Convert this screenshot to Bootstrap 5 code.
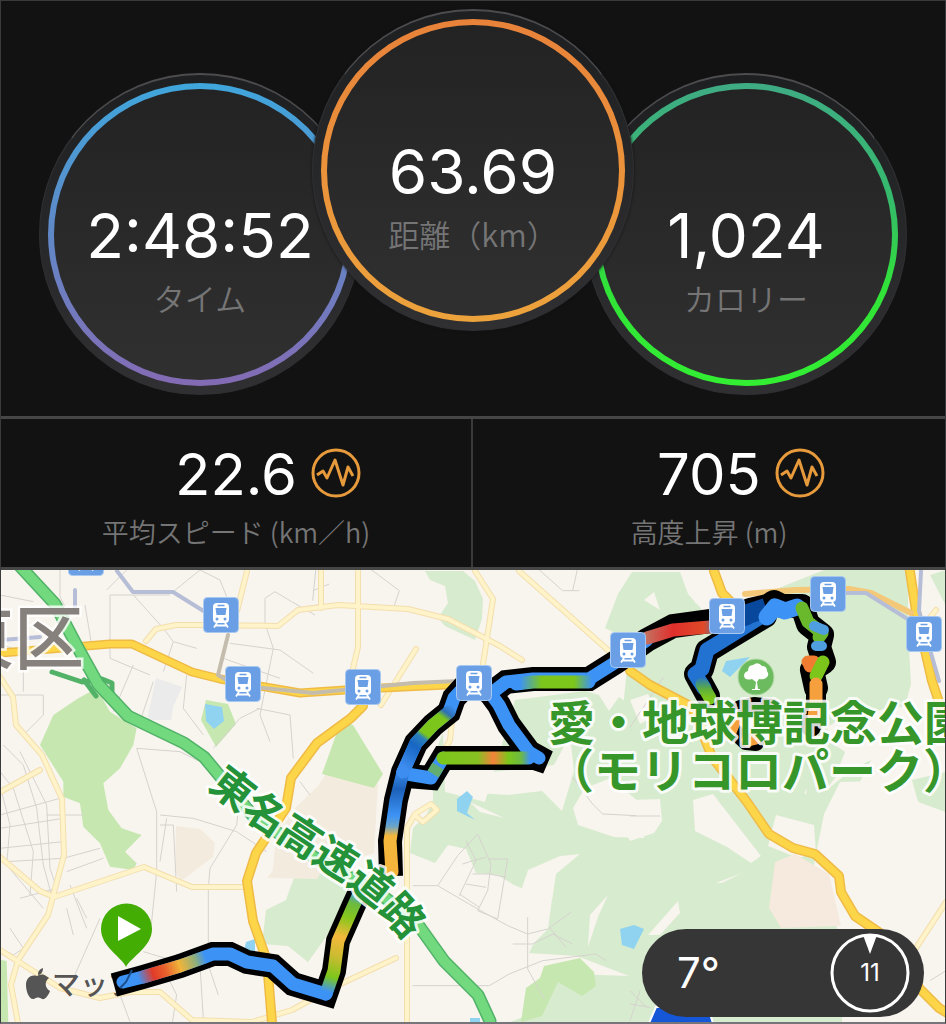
<!DOCTYPE html>
<html lang="ja">
<head>
<meta charset="utf-8">
<meta name="viewport" content="width=device-width, initial-scale=1">
<title>アクティビティ</title>
<link rel="stylesheet" href="https://cdn.jsdelivr.net/npm/bootstrap@5.3.0/dist/css/bootstrap.min.css">
<style>
body{background:#121212;color:#fff;font-family:Inter,"Noto Sans CJK JP",sans-serif}
.activity{border:1px solid #3a3b3d;border-bottom:2px solid #77757a}
.dials{padding:8px 0 21px}
.dial{width:322px;height:322px;flex:none;padding:8px;background:linear-gradient(#1e1f21,#303032);border:1px solid #303033;border-top:2px solid #4c4b4e}
.dial-side{margin-top:64px}
.dial-left{margin-right:-49px}
.dial-right{margin-left:-49px}
.dial-main{z-index:1;box-shadow:0 0 3px #121212}
.dial-face{border:6px solid transparent;padding-top:115px}
.ring-blue{background:linear-gradient(#232324,#303031) padding-box,linear-gradient(#3fa6dc,#5d8bc9 45%,#846bb4) border-box}
.ring-orange{background:linear-gradient(#232324,#303031) padding-box,linear-gradient(#e8823a,#eda33c) border-box}
.ring-green{background:linear-gradient(#232324,#303031) padding-box,linear-gradient(#3fac84,#35b96c 38%,#31e338 68%,#33ee33) border-box}
.dial-value{font-size:62px;line-height:64px}
.dial-label{font-size:31px;line-height:36px;margin-top:12px;color:#757576;font-family:"Noto Sans CJK JP",sans-serif;font-weight:350}
.stats{border-top:3px solid #464646;border-bottom:3px solid #464646}
.stat{padding:24px 0 19px}
.stat-first{border-right:2px solid #3a3a3a}
.stat-value{font-size:58px;line-height:62px}
.stat-icon{left:100%;top:5px;margin-left:14px}
.stat-label{font-size:27px;line-height:32px;margin-top:11px;color:#757576;font-family:"Noto Sans CJK JP",sans-serif;font-weight:350}
.map-canvas{background:#f8f4ee;width:100%;height:auto}
.map-canvas text{font-family:"Noto Sans CJK JP",sans-serif}
.weather{right:21px;bottom:5px;width:282px;height:88px;background:#373637;padding:0 14px 0 35px}
.weather-temp{font-size:42px;line-height:48px}
.weather-wind{width:80px;height:80px}
.weather-wind span{font-size:24px;line-height:28px}
.thin path{stroke:#d6d2ce;stroke-width:3;fill:none}
.road{fill:none;stroke-linejoin:round;stroke-linecap:round}
.route-case{stroke-linejoin:miter;stroke-linecap:butt}
</style>
</head>
<body>
<main class="activity">
  <section class="dials d-flex justify-content-center align-items-start">
    <div class="dial dial-side dial-left rounded-circle">
      <div class="dial-face ring-blue rounded-circle w-100 h-100 text-center">
        <div class="dial-value">2:48:52</div><div class="dial-label">タイム</div>
      </div>
    </div>
    <div class="dial dial-main rounded-circle position-relative">
      <div class="dial-face ring-orange rounded-circle w-100 h-100 text-center">
        <div class="dial-value">63.69</div><div class="dial-label">距離（km）</div>
      </div>
    </div>
    <div class="dial dial-side dial-right rounded-circle">
      <div class="dial-face ring-green rounded-circle w-100 h-100 text-center">
        <div class="dial-value">1,024</div><div class="dial-label">カロリー</div>
      </div>
    </div>
  </section>

  <section class="stats row g-0 text-center">
    <div class="stat stat-first col-6">
      <div class="stat-value d-inline-block position-relative">22.6
        <svg class="stat-icon position-absolute" width="50" height="50" viewBox="0 0 50 50" fill="none" stroke="#e69a3c" aria-hidden="true"><circle cx="25" cy="25" r="23" stroke-width="3"/><path d="M6 27l6-4 4 7 8-18 8 25 5-18 5 9" stroke-width="3" stroke-linejoin="round"/></svg>
      </div>
      <div class="stat-label">平均スピード (km／h)</div>
    </div>
    <div class="stat col-6">
      <div class="stat-value d-inline-block position-relative">705
        <svg class="stat-icon position-absolute" width="50" height="50" viewBox="0 0 50 50" fill="none" stroke="#e69a3c" aria-hidden="true"><circle cx="25" cy="25" r="23" stroke-width="3"/><path d="M6 27l6-4 4 7 8-18 8 25 5-18 5 9" stroke-width="3" stroke-linejoin="round"/></svg>
      </div>
      <div class="stat-label">高度上昇 (m)</div>
    </div>
  </section>

  <section class="position-relative">
    <svg class="map-canvas d-block" viewBox="1 570 944 452" role="img" aria-label="ルートマップ">
      <defs>
        <symbol id="station" viewBox="0 0 36 36">
          <rect x=".5" y=".5" width="35" height="35" rx="4" fill="#6a9fe6" stroke="#a9c8f0"/>
          <path d="M14 6h8q4 0 4 4v12q0 4-4 4h-8q-4 0-4-4V10q0-4 4-4z" fill="#fff"/>
          <path d="M14.500 8.500h7" stroke="#6a9fe6" stroke-width="1.500"/>
          <path d="M12.500 11h11l-1 7h-9z" fill="#6a9fe6"/>
          <circle cx="14" cy="22" r="1.500" fill="#6a9fe6"/><circle cx="22" cy="22" r="1.500" fill="#6a9fe6"/>
          <path d="M14 26l-3 4.500M22 26l3 4.500M13 28.500h10" stroke="#fff" stroke-width="1.800"/>
        </symbol>
        <linearGradient id="g-start" gradientUnits="userSpaceOnUse" x1="138" y1="978" x2="205" y2="956"><stop stop-color="#3d93f5"/><stop offset=".22" stop-color="#e23b28"/><stop offset=".4" stop-color="#e8602c"/><stop offset=".62" stop-color="#f0b43a"/><stop offset=".85" stop-color="#8fae7a"/><stop offset="1" stop-color="#3d93f5"/></linearGradient>
        <linearGradient id="g-rise" gradientUnits="userSpaceOnUse" x1="328" y1="992" x2="358" y2="894"><stop stop-color="#3d93f5"/><stop offset=".15" stop-color="#7cc61b"/><stop offset=".35" stop-color="#c9bc30"/><stop offset=".55" stop-color="#f5b83c"/><stop offset=".75" stop-color="#86c61c"/><stop offset=".9" stop-color="#6cba40"/><stop offset="1" stop-color="#4c9fd8"/></linearGradient>
        <linearGradient id="g-mid" gradientUnits="userSpaceOnUse" x1="0" y1="874" x2="0" y2="768"><stop stop-color="#f5b33c"/><stop offset=".36" stop-color="#f5b83c"/><stop offset=".45" stop-color="#6aa4c8"/><stop offset=".55" stop-color="#3d93f5"/><stop offset=".8" stop-color="#1c61b8"/><stop offset="1" stop-color="#3d93f5"/></linearGradient>
        <linearGradient id="g-up" gradientUnits="userSpaceOnUse" x1="405" y1="768" x2="452" y2="705"><stop stop-color="#3d8df0"/><stop offset=".3" stop-color="#1766c4"/><stop offset=".44" stop-color="#2a80b8"/><stop offset=".5" stop-color="#7cc61b"/><stop offset=".8" stop-color="#7cc61b"/><stop offset=".88" stop-color="#2f6fb4"/><stop offset="1" stop-color="#3d93f5"/></linearGradient>
        <linearGradient id="g-low" gradientUnits="userSpaceOnUse" x1="443" y1="0" x2="530" y2="0"><stop stop-color="#7cc61b"/><stop offset=".4" stop-color="#86c022"/><stop offset=".58" stop-color="#f4823a"/><stop offset=".75" stop-color="#7cc61b"/><stop offset=".9" stop-color="#6db944"/><stop offset="1" stop-color="#3d93f5"/></linearGradient>
        <linearGradient id="g-east" gradientUnits="userSpaceOnUse" x1="520" y1="0" x2="592" y2="0"><stop stop-color="#3d93f5"/><stop offset=".3" stop-color="#7cc61b"/><stop offset=".75" stop-color="#7cc61b"/><stop offset="1" stop-color="#3d93f5"/></linearGradient>
        <linearGradient id="g-red" gradientUnits="userSpaceOnUse" x1="642" y1="0" x2="745" y2="0"><stop stop-color="#c07a68"/><stop offset=".3" stop-color="#e02f2c"/><stop offset=".6" stop-color="#e04a28"/><stop offset=".75" stop-color="#3f7fc0"/><stop offset="1" stop-color="#07489c"/></linearGradient>
        <linearGradient id="g-loop" gradientUnits="userSpaceOnUse" x1="0" y1="676" x2="0" y2="698"><stop stop-color="#2272d2"/><stop offset=".6" stop-color="#5fae3c"/><stop offset="1" stop-color="#7cc61b"/></linearGradient>
        <path id="expressway-name" d="M207 788L252 823L293 850L341 880L375 907L425 962"/>
      </defs>

      <!-- woodland and parks -->
      <g fill="#d7ebce">
        <path d="M425 571h38l12 10 8 18-1 20-7 21-30-14-7-8 10-15-3-17-15-6z"/>
        <path d="M618 594l14-22h48l8 22 18 20 38-12 80-32h84v60l3 54-6 22-60 10-16 10-4 12 20 14-10 26-8 10-20 56-8 4 8-60-10 20-36 20-16 8-44-28-50-20-30-60 6-60 18-20-40-20z"/>
        <path d="M642 646l50-14 10 50-20-8z"/>
        <path d="M515 700l70-9 14 4 10 16 10-14 28 20 50 24 60 24 50 30 20-5 24-20 20-10-30 60-3 46 10 5-6 50v120H503l0-16 20-8 2-20 14-16 30-7 60 2-52-20-48-3 5-10 14-14 8-60-6-6-26 26-10-4-16-10-22-2-10-24-18-4-13 18-25-10 3-25 14-14 6-14 0-30 5-24 5-14 2 60 40 10z"/>
        <path d="M912 780l34-8v42l-20-3-14-18zM930 575l16-5v36z"/>
        <path d="M296 872l10-10 32 8 20 0 30 14-20 12-20 10-40 56-20-16-26-2 4-34 20-10z"/>
      </g>
      <g fill="#f8f4ee">
        <path d="M573 808l12-20 26-10 35 30-2 30-30-1-36-12z"/>
        <path d="M466 775l88-10 16-30 4 36-12 40-20-20-34 4-30-2zM470 802l34 16-24-6z"/>
        <path d="M630 800l30-1 2 22-8 12-24 8-14-24zM693 800l20-6 48 62-10 7-24-16-32-16z"/>
        <path d="M776 815l38 10 2 28-18 5-30-12zM840 782l72-2 6 22 28 10v122H840l-28-60 12-60z"/>
        <path d="M528 870l32-14 20-2-24 20-4 26-24 20-20 10zM588 945l2-30 18-20-10 22-10 30z"/>
        <path d="M648 935l30-34 2 12-20 22zM716 883l26-10-20 10zM682 575l10-4 10 28-6 5zM644 600l10-8 6 18z"/>
        <path d="M630 700l18-6 12 20-20 10z"/>
      </g>
      <path fill="#f4ebdf" d="M318 786l10-15 50 12-4 70-50 16-52 8 4-40 20-30zM176 826l24 3 15 14-2 14-32 24-6-10zM286 855h45l-14 24-50-1z"/>
      <path fill="#f5eadd" d="M775 862l20-8 34 20 12 52-60 2-12-20z"/>
      <path fill="#ebebeb" d="M156 678l26 9-9 20-2 13-24 0z"/>
      <g fill="#c6e8b0">
        <path transform="translate(0 565) scale(.3333)" d="M120 540l40-90 75-50 55-30 40 70 80 50-10 50-40 70-50 45 15 80 40 55 60 20-50 50 35 35-10 20-70-10-30-70-50-50-10-70-50-20v-45zM0 1185l20 3 5 188H0z"/>
        <path d="M201 720l5-20 22 4 8 20-20 23zM341 721l12 4 30 49-9 14-52-14zM521 1022l5-34 14-10 4-12 36-8 14 14 2 14-14 10-24-14-16 34z"/>
      </g>
      <g fill="#8fd3f0">
        <path d="M205 704l17 3 2 14-10 8-8-8zM457 799l10-8 6 6-4 10-2 6 8 7-18-9zM620 929l14-4 10 4-10 20-12-4zM246 942l9-3v12h-11zM726 661l24-4-20 20-8-6zM470 1018h10v4h-10z"/>
      </g>

      <!-- local streets -->
      <g class="thin">
        <g transform="translate(0 565) scale(.3333)">
          <path d="M180 15v80l30 60M255 120l20 120M330 90v190l120 50M330 90h180M400 90l90 100 30 40-30 90M400 300l-60 140M380 15l-60 60M520 80l80-65 60 30 20 50M795 180v-80l30-20 50 30 70 40M690 235l150 20 100 70M670 280l170 60M800 190l20 60-40 200 30 80M560 330l-10 100 60 80M460 350l-40 120M770 430l100 20 10 130M520 230l70 20"/>
          <path d="M410 550l60 190v180l-15 150-20 50M410 550l130 10 100 50 90 80M640 550l80-90 60-30M720 690l-10 90-80 130-5 60 0 230 30 90M480 750l100 10 130 40 90 60M480 780h40l10 200M500 760l-20 130M900 650l30 40M0 90l100 20M0 240l120 30M70 290v90M0 390l130 0 0 60-60 60"/>
          <path d="M10 540l60 60 40 130 20 170 30 110M60 560l80 160 10 190 20 60M0 620l40 50 60 190-10 130M0 750l180-50M0 790l190-30M0 850l190-20M20 890l170-10M60 1000l110-30M0 660l30 120-10 120 110 130M140 750h110M190 880l110-30M200 920l110-40M200 1030l20 80M230 1000l30 60M210 960l50 130M30 1090l40 60-30 20-40-20M300 1060l-80 180M430 1160l100 30 100 10M500 1190v40l30 60-20 130M600 1200l10 160 70 60M360 1290l30 80"/>
        </g>
        <g transform="translate(316 794) scale(.3333)">
          <path d="M290 275h75l60-90 60-65 40 90-10 80-30 60 60 25 30-180h-55M365 275l120 70 90 50 60 25 60-15 70-50M450 140l30 60-50 105M440 210l30-10 40-10M520 240l50 10M470 240h50M450 270l60 10M430 300l60 40M590 450l60 0 60-30 60 30M635 370v155l50 90M290 575h230l60-35 100-40 160-20 30 20M700 400l50 60"/>
          <path d="M770-50l60 80 30 30 100 5M510-870l80 110 60 70 90 80h50M590-800l60-60M770-610l20-90 20-30M50-870l-30 90M10-780l-20 200M130-700l120 90-20 60M-10-610l50-20M-40-560l60-10"/>
        </g>
        <g transform="translate(630 794) scale(.3333)">
          <path d="M0 66h90M900 560l48-30M0 590l50 50M0 630l60 10M30 590l-30 90"/>
          <path d="M0-200l40-60 40-60 20-30"/>
        </g>
      </g>

      <!-- minor roads -->
      <g class="road">
        <g stroke="#f3dfae" stroke-width="6">
          <path d="M0 677l13 20 3 28 26 30 20 44 2 56-16 60-30 45-7 25 7 38M0 792l40-22M0 857l40 34 14 6 90-30 48 20h54M0 950l60 38 40 10 30-6 30 0 32 28 60 2 40-12 40-22 64-30M146 641l10-12 20-4 40 0 62 1 20-16 40-5 70 4 40 10 52 27 22 14M247 571l-10 40M416 649l-35 56M321 571v37M358 571v76l-7 30"/>
          <path d="M475 571l18 28-10 65M519 571l90 80M407 1022V828l8-14 16-10 6 6-14 12-6-5M452 720l-2 20-12 22M946 902l-30 46M928 620l8-10"/>
        </g>
        <g stroke="#fff3c9" stroke-width="4">
          <path d="M0 677l13 20 3 28 26 30 20 44 2 56-16 60-30 45-7 25 7 38M0 792l40-22M0 857l40 34 14 6 90-30 48 20h54M0 950l60 38 40 10 30-6 30 0 32 28 60 2 40-12 40-22 64-30M146 641l10-12 20-4 40 0 62 1 20-16 40-5 70 4 40 10 52 27 22 14M247 571l-10 40M416 649l-35 56M321 571v37M358 571v76l-7 30"/>
          <path d="M475 571l18 28-10 65M519 571l90 80M407 1022V828l8-14 16-10 6 6-14 12-6-5M452 720l-2 20-12 22M946 902l-30 46M928 620l8-10"/>
        </g>
        <!-- trunk roads -->
        <path stroke="#efbb45" stroke-width="9" d="M0 653l50-4 60-5h22l60 28 28 7 80 14 60-4 130-6"/>
        <path stroke="#fcd548" stroke-width="6" d="M0 653l50-4 60-5h22l60 28 28 7 80 14 60-4 130-6"/>
        <path stroke="#efbb45" stroke-width="10" d="M363 706l-12 12-34 25-26 35-5 30-30 45-9 28 6 40 14 40 5 62M714 571l8 22 12 12M630 671l20 14 42 22 20 50 35 45 22 32 24 14 22 6 24 22 2 16 14 24 50 34 14 38 20 20 30 18M909 565l7 46 16 70 10 30"/>
        <path stroke="#fcd548" stroke-width="7" d="M363 706l-12 12-34 25-26 35-5 30-30 45-9 28 6 40 14 40 5 62M714 571l8 22 12 12M630 671l20 14 42 22 20 50 35 45 22 32 24 14 22 6 24 22 2 16 14 24 50 34 14 38 20 20 30 18M909 565l7 46 16 70 10 30"/>
        <path stroke="#f3c878" stroke-width="6" d="M745 594l50-4 54-1 22 4 40 20"/>
        <!-- rail lines -->
        <path stroke="#b5bed6" stroke-width="4" d="M75 590v20M117 571l16 21h40l45 28M0 640l40-3M921 571l-2 40 20 70M846 593l20 0 40 25 16 10"/>
        <path stroke="#c4bdae" stroke-width="4" d="M228 635l-10 40 20 12M243 686l70 7 60-6 40-4 45-2"/>
      </g>

      <!-- expressway -->
      <g class="road">
        <path stroke="#51b268" stroke-width="5" d="M52 672l30 10 20-3 10 4 0 12-8-8M84 680l12 16"/>
        <path stroke="#51b268" stroke-width="13" d="M18 564l37 40 23 44 20 36 30 32 56 27 20 14 50 60 60 40 70 40 30 22 30 42 34 34 12 26"/>
        <path stroke="#72d97f" stroke-width="10" d="M18 564l37 40 23 44 20 36 30 32 56 27 20 14 50 60 60 40 70 40 30 22 30 42 34 34 12 26"/>
      </g>

      <text x="-56" y="664" font-size="70" font-weight="500" fill="#87817d" stroke="#fff" stroke-opacity=".8" stroke-width="5" paint-order="stroke">東区</text>
      <path fill="#555" d="M37 976c2-1 5-3 9 0l3 2c-5 4-4 10 1 13-2 5-5 9-8 8-3-2-5-2-8 0-5 1-8-8-8-14s4-11 11-9zM38 975c0-4 2-6 5-7 0 4-2 7-5 7z"/>
      <text x="52" y="995" font-size="28" font-weight="500" fill="#555">マップ</text>

      <!-- recorded route -->
      <g class="road route-case" stroke="#000" stroke-width="24">
        <path d="M114 985l29-8 37-11 33-12h17l17 8 26 4 20 18 23 7 10 3 8-23 4-30 15-34 6-13"/>
        <path d="M391 876l-1-35 6-41 7-28 13-29 17-18 16-13 5-14 12-13 27 7 13-10 27-3h56l27-17 31-22 26-14 37-5h37l20-11"/>
        <path d="M488 690l11 15 10 20 20 27 18 10-12-4H443l-12 20-24-2"/>
      </g>
      <g class="road" stroke="#000" stroke-width="24">
        <path d="M765 616l-35 21-23 14-5 18-6 5 12 22"/>
        <path d="M750 610l18-4 6-4 8 4 20 0 6 18 14 11-3 12 5 15-12 8 4 18"/>
        <path d="M816 688v15l-5 24" stroke-width="20"/>
        <path d="M740 708l14-3 18 2M733 730l13 12 10 1" stroke-width="16"/>
      </g>
      <g class="road" stroke="#3d93f5" stroke-width="13">
        <path d="M123 982l20-5 37-11 33-12h17l17 8 26 4 20 18 23 7 10 3"/>
        <path d="M403 772l13-29 17-18 16-13 5-14 12-13 27 7 13-10 27-3h56l27-17 31-22"/>
        <path d="M488 690l11 15 10 20 20 27 10 6M443 758l-12 20-24-4"/>
        <path stroke="#2272d2" stroke-width="15" d="M765 614l-35 22-23 14-5 19-7 5 9 14"/>
        <path stroke="url(#g-loop)" d="M702 684l8 14"/>
        <path stroke="url(#g-start)" d="M143 977l37-11 25-9"/>
        <path stroke="url(#g-rise)" d="M326 994l8-23 4-30 15-34 6-13"/>
        <path stroke="url(#g-mid)" d="M392 872l-2-31 6-41 7-28"/>
        <path stroke="url(#g-up)" d="M403 772l13-29 17-18 16-13"/>
        <path stroke="url(#g-low)" d="M443 758h86"/>
        <path stroke="#62ad70" stroke-linecap="butt" d="M438 766l-5 8"/>
        <path stroke="url(#g-east)" d="M516 684l17-2h56"/>
        <path stroke="url(#g-red)" d="M647 638l26-8 37-3 37-8"/>
        <path stroke="#07489c" stroke-width="20" stroke-linecap="butt" d="M742 616l24-8"/>
        <path stroke-width="17" d="M767 617l8-10 10 4 12-4"/>
        <path stroke="#6ab82c" d="M802 608l6 14 14 11-3 4"/>
        <path stroke="#4f9ee0" stroke-width="10" d="M814 626l10 4M816 646l6 0"/>
        <path stroke="#ef7c30" d="M808 662h6l-4 4"/>
        <path stroke="#7cc61b" d="M823 662l-7 14"/>
        <path stroke="#f5a03c" d="M816 684v22l-2 10M734 722l-4 10M748 740l8-2"/>
      </g>
      <path fill="none" stroke="#1b4f8c" stroke-width="2" d="M132 970l-6 12-6 6"/>

      <!-- stations -->
      <use href="#station" x="68" y="540" width="36" height="36"/>
      <use href="#station" x="203" y="597" width="36" height="36"/>
      <use href="#station" x="225" y="666" width="36" height="36"/>
      <use href="#station" x="345" y="669" width="36" height="36"/>
      <use href="#station" x="456" y="665" width="36" height="36"/>
      <use href="#station" x="610" y="632" width="36" height="36"/>
      <use href="#station" x="709" y="598" width="36" height="36"/>
      <use href="#station" x="810" y="576" width="36" height="36"/>
      <use href="#station" x="906" y="616" width="36" height="36"/>

      <!-- park marker -->
      <circle cx="756" cy="677" r="18" fill="#6cbb5e" stroke="#b4dba9"/>
      <path fill="#fff" d="M755 689l1-7-4-3q-7 2-8-3 0-4 4-5 0-6 5-6 5-4 9 1 5 0 5 5 3 4-1 7-3 2-7 1l-2 3 1 7h2v1h-8v-1z"/>

      <g fill="#36962a" stroke="#fff" stroke-opacity=".85" stroke-width="6" paint-order="stroke" stroke-linejoin="round">
        <text font-size="47" font-weight="700" x="548" y="740">愛・地球博記念公園</text>
        <text font-size="47" font-weight="700" x="547" y="788">（モリコロパーク）</text>
        <text font-size="42" font-weight="700" fill="#249239"><textPath href="#expressway-name">東名高速道路</textPath></text>
      </g>

      <!-- start pin -->
      <path fill="#43ad04" d="M126 967c-4-10-25-20-25-38a25 25 0 0 1 51 0c0 18-21 28-26 38z"/>
      <path fill="#fff" d="M118 916l23 13-23 12z"/>
      <path fill="#1557d6" stroke="#fff" stroke-width="2" d="M646 1030l10-23h52l7 23z"/>
    </svg>

    <div class="weather position-absolute rounded-pill d-flex align-items-center justify-content-between">
      <span class="weather-temp">7°</span>
      <div class="weather-wind position-relative d-flex align-items-center justify-content-center">
        <svg class="position-absolute top-0 start-0" width="80" height="80" viewBox="0 0 80 80" aria-hidden="true"><circle cx="40" cy="40" r="38" fill="none" stroke="#fff" stroke-width="3"/><path d="M33 2h14l-7 19z" fill="#fff"/></svg>
        <span>11</span>
      </div>
    </div>
  </section>
</main>
<script src="https://cdn.jsdelivr.net/npm/bootstrap@5.3.0/dist/js/bootstrap.bundle.min.js"></script>
</body>
</html>
